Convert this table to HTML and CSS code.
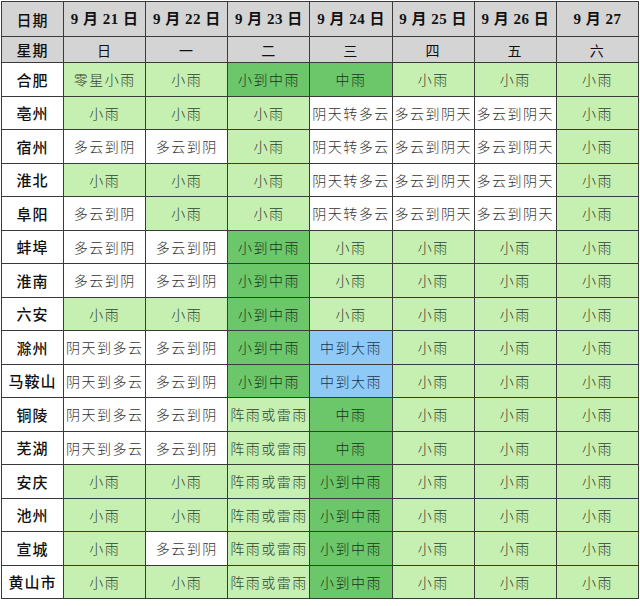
FILE: index.html
```html
<!DOCTYPE html>
<html lang="zh">
<head>
<meta charset="utf-8">
<title>天气预报</title>
<link rel="stylesheet" href="styles.css">
</head>
<body>
<div class="wrap">
<table class="forecast">
  <colgroup>
    <col class="c-city"><col class="c-day"><col class="c-day"><col class="c-day"><col class="c-day"><col class="c-day"><col class="c-day"><col class="c-day">
  </colgroup>
  <thead>
    <tr class="r-date">
      <th class="h-label">日期</th>
      <th>9 月 21 日</th><th>9 月 22 日</th><th>9 月 23 日</th><th>9 月 24 日</th><th>9 月 25 日</th><th>9 月 26 日</th><th>9 月 27</th>
    </tr>
    <tr class="r-week">
      <th class="h-label">星期</th>
      <th>日</th><th>一</th><th>二</th><th>三</th><th>四</th><th>五</th><th>六</th>
    </tr>
  </thead>
  <tbody>
    <tr><th>合肥</th><td class="l">零星小雨</td><td class="l">小雨</td><td class="m">小到中雨</td><td class="m">中雨</td><td class="l">小雨</td><td class="l">小雨</td><td class="l">小雨</td></tr>
    <tr><th>亳州</th><td class="l">小雨</td><td class="l">小雨</td><td class="l">小雨</td><td class="w">阴天转多云</td><td class="w">多云到阴天</td><td class="w">多云到阴天</td><td class="l">小雨</td></tr>
    <tr><th>宿州</th><td class="w">多云到阴</td><td class="w">多云到阴</td><td class="l">小雨</td><td class="w">阴天转多云</td><td class="w">多云到阴天</td><td class="w">多云到阴天</td><td class="l">小雨</td></tr>
    <tr><th>淮北</th><td class="l">小雨</td><td class="l">小雨</td><td class="l">小雨</td><td class="w">阴天转多云</td><td class="w">多云到阴天</td><td class="w">多云到阴天</td><td class="l">小雨</td></tr>
    <tr><th>阜阳</th><td class="w">多云到阴</td><td class="l">小雨</td><td class="l">小雨</td><td class="w">阴天转多云</td><td class="w">多云到阴天</td><td class="w">多云到阴天</td><td class="l">小雨</td></tr>
    <tr><th>蚌埠</th><td class="w">多云到阴</td><td class="w">多云到阴</td><td class="m">小到中雨</td><td class="l">小雨</td><td class="l">小雨</td><td class="l">小雨</td><td class="l">小雨</td></tr>
    <tr><th>淮南</th><td class="w">多云到阴</td><td class="w">多云到阴</td><td class="m">小到中雨</td><td class="l">小雨</td><td class="l">小雨</td><td class="l">小雨</td><td class="l">小雨</td></tr>
    <tr><th>六安</th><td class="l">小雨</td><td class="l">小雨</td><td class="m">小到中雨</td><td class="l">小雨</td><td class="l">小雨</td><td class="l">小雨</td><td class="l">小雨</td></tr>
    <tr><th>滁州</th><td class="w">阴天到多云</td><td class="w">多云到阴</td><td class="m">小到中雨</td><td class="b">中到大雨</td><td class="l">小雨</td><td class="l">小雨</td><td class="l">小雨</td></tr>
    <tr><th>马鞍山</th><td class="w">阴天到多云</td><td class="w">多云到阴</td><td class="m">小到中雨</td><td class="b">中到大雨</td><td class="l">小雨</td><td class="l">小雨</td><td class="l">小雨</td></tr>
    <tr><th>铜陵</th><td class="w">阴天到多云</td><td class="w">多云到阴</td><td class="l">阵雨或雷雨</td><td class="m">中雨</td><td class="l">小雨</td><td class="l">小雨</td><td class="l">小雨</td></tr>
    <tr><th>芜湖</th><td class="w">阴天到多云</td><td class="w">多云到阴</td><td class="l">阵雨或雷雨</td><td class="m">中雨</td><td class="l">小雨</td><td class="l">小雨</td><td class="l">小雨</td></tr>
    <tr><th>安庆</th><td class="l">小雨</td><td class="l">小雨</td><td class="l">阵雨或雷雨</td><td class="m">小到中雨</td><td class="l">小雨</td><td class="l">小雨</td><td class="l">小雨</td></tr>
    <tr><th>池州</th><td class="l">小雨</td><td class="l">小雨</td><td class="l">阵雨或雷雨</td><td class="m">小到中雨</td><td class="l">小雨</td><td class="l">小雨</td><td class="l">小雨</td></tr>
    <tr><th>宣城</th><td class="l">小雨</td><td class="w">多云到阴</td><td class="l">阵雨或雷雨</td><td class="m">小到中雨</td><td class="l">小雨</td><td class="l">小雨</td><td class="l">小雨</td></tr>
    <tr><th>黄山市</th><td class="l">小雨</td><td class="l">小雨</td><td class="l">阵雨或雷雨</td><td class="m">小到中雨</td><td class="l">小雨</td><td class="l">小雨</td><td class="l">小雨</td></tr>
  </tbody>
</table>
</div>
</body>
</html>
```

FILE: styles.css
```css
html, body {
  margin: 0;
  padding: 0;
  background: #ffffff;
}

.wrap {
  padding: 1px 1px 0 1px;
}

.forecast {
  border-collapse: collapse;
  table-layout: fixed;
  width: 638px;
  font-family: "Noto Sans CJK SC", "Liberation Sans", sans-serif;
  font-size: 14px;
}

.c-city { width: 62px; }
.c-day { width: 82px; }

.forecast th,
.forecast td {
  border: 1px solid #3a3a3a;
  padding: 0;
  text-align: center;
  vertical-align: middle;
  white-space: nowrap;
  overflow: hidden;
  letter-spacing: 1.5px;
  line-height: 1;
}

.forecast td {
  font-weight: 300;
}

.forecast thead th {
  background: #d4d4d4;
  color: #111111;
}

.r-date { height: 35px; }
.r-week { height: 26px; }
.forecast tbody tr { height: 33.5px; }

.r-date th {
  font-family: "Liberation Serif", "Noto Sans CJK SC", serif;
  font-weight: bold;
  font-size: 15px;
  letter-spacing: 0.5px;
}

.r-date th.h-label,
.r-week th.h-label {
  font-family: "Noto Sans CJK SC", sans-serif;
  font-weight: 500;
  font-size: 15px;
  letter-spacing: 1px;
}

.r-week th {
  font-weight: 400;
  font-size: 14px;
  color: #1a1a1a;
}

.forecast tbody th {
  background: #ffffff;
  color: #111111;
  font-weight: 500;
  font-size: 15px;
  letter-spacing: 1px;
}

.forecast td.l {
  background: #c6efb2;
  color: #2f3f2f;
}

.forecast td.m {
  background: #6cc66a;
  color: #1a331a;
}

.forecast td.b {
  background: #8ecaf5;
  color: #1c3350;
}

.forecast td.w {
  background: #ffffff;
  color: #333333;
}
```
